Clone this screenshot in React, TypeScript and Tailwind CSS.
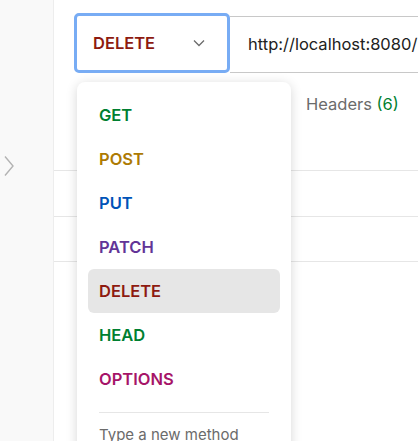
import React from 'react'

const methods = [
  { name: 'GET', color: 'text-[#007f31]' },
  { name: 'POST', color: 'text-[#ad7a03]' },
  { name: 'PUT', color: 'text-[#0053b8]' },
  { name: 'PATCH', color: 'text-[#623497]' },
  { name: 'DELETE', color: 'text-[#8e1a10]' },
  { name: 'HEAD', color: 'text-[#007f31]' },
  { name: 'OPTIONS', color: 'text-[#a61468]' },
]

function ChevronDown() {
  return (
    <svg width="12" height="8" viewBox="0 0 12 8" fill="none" className="text-[#6b6b6b]">
      <path d="M1 1.5l5 5 5-5" stroke="currentColor" strokeWidth="1.3" />
    </svg>
  )
}

export default function App() {
  const selected = 'DELETE'

  return (
    <div className="flex h-[441px] w-[418px] overflow-hidden bg-white font-['Inter',sans-serif]">
      {/* Sidebar */}
      <div className="w-[54px] shrink-0 border-r border-[#ededed] bg-[#f9f9f9] pt-[155px]">
        <svg width="12" height="22" viewBox="0 0 12 22" fill="none" className="ml-[3px] text-[#b3b3b3]">
          <path d="M2 1.5l8 9.5-8 9.5" stroke="currentColor" strokeWidth="1.4" />
        </svg>
      </div>

      {/* Main */}
      <div className="relative flex-1">
        <div className="flex pl-[20px] pt-[13px]">
          <div className="flex h-[60px] w-[156px] shrink-0 items-center justify-between rounded-[5px] border-[3px] border-[#78acf4] pl-[16px] pr-[22px]">
            <span className="text-[16.5px] font-semibold text-[#8e1a10]">{selected}</span>
            <ChevronDown />
          </div>
          <div className="mt-[3px] flex h-[57px] flex-1 items-center overflow-hidden border-y border-[#c8c8c8] pl-[18px]">
            <span className="whitespace-nowrap text-[16.5px] text-[#212121]">http://localhost:8080/</span>
          </div>
        </div>

        <div className="flex pl-[252px] pt-[19px] text-[16.5px] leading-[24px] text-[#6b6b6b]">
          <span className="whitespace-nowrap">
            Headers <span className="text-[#007f31]">(6)</span>
          </span>
        </div>

        <div className="mt-[54px] border-t border-[#e6e6e6]" />
        <div className="mt-[45px] border-t border-[#e6e6e6]" />
        <div className="mt-[44px] border-t border-[#e6e6e6]" />

        {/* Dropdown */}
        <div className="absolute left-[23px] top-[82px] w-[214px] rounded-t-[8px] bg-white px-[11px] pt-[11px] shadow-[0_2px_12px_rgba(0,0,0,0.16)]">
          {methods.map((m) => (
            <div
              key={m.name}
              className={`flex h-[44px] items-center rounded-[6px] pl-[11px] text-[16.5px] font-semibold ${m.color} ${
                m.name === selected ? 'bg-[#e6e6e6]' : ''
              }`}
            >
              {m.name}
            </div>
          ))}
          <div className="mx-[11px] mt-[11px] border-t border-[#e6e6e6]" />
          <div className="h-[40px] pl-[11px] pt-[11px] text-[15px] text-[#6b6b6b]">Type a new method</div>
        </div>
      </div>
    </div>
  )
}
